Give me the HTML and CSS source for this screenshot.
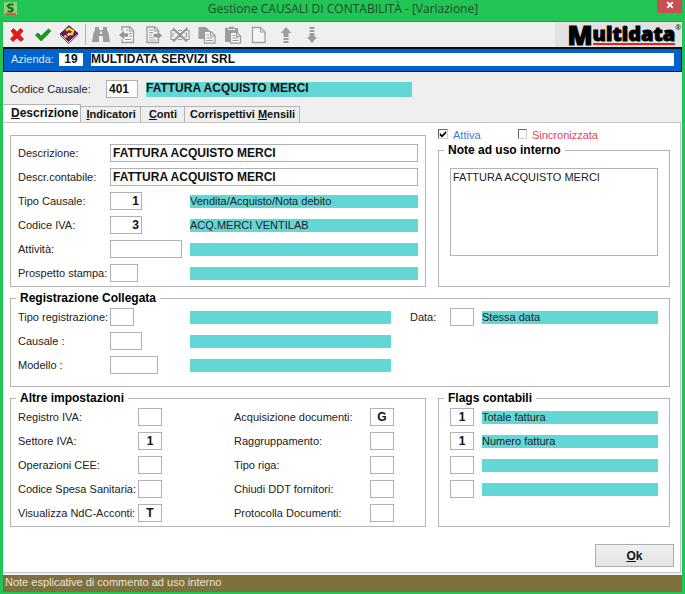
FILE: index.html
```html
<!DOCTYPE html>
<html lang="it">
<head>
  <meta charset="UTF-8" />
  <meta name="viewport" content="width=device-width, initial-scale=1.0" />
  <title>Gestione CAUSALI DI CONTABILITÀ - [Variazione]</title>
  <link rel="stylesheet" href="styles.css">
</head>
<body>
  <div class="window">
    <header class="titlebar">
      <svg class="app-icon" width="13" height="13" viewBox="0 0 13 13">
        <rect width="13" height="13" fill="#8fd07c" />
        <path d="M9.500 2.500H5.500L3.800 4L5 5.500L8 6.500L8.800 8L7.500 9.500H3.500" fill="none" stroke="#14701c" stroke-width="2.200" />
        <path d="M1 12H12" stroke="#e0402a" stroke-width="1.500" />
      </svg>
      <h1>Gestione CAUSALI DI CONTABILITÀ - [Variazione]</h1>
      <button class="close" type="button" aria-label="Chiudi">
        <svg width="8" height="8" viewBox="0 0 8 8"><path d="M1.200 1.200L6.800 6.800M6.800 1.200L1.200 6.800" stroke="#fff" stroke-width="1.800" /></svg>
      </button>
    </header>

    <div class="toolbar">
      <div class="tools">
        <button type="button" aria-label="Annulla">
          <svg width="18" height="18" viewBox="0 0 18 18"><path d="M3 5L5.500 2.500L9 6.200L12.500 2.500L15 5L11.700 9L15.500 13L13 15.500L9 11.800L5 15.500L2.500 13L6.300 9Z" fill="#e31b12" stroke="#b30d08" stroke-width=".8" /></svg>
        </button>
        <button type="button" aria-label="Conferma">
          <svg width="18" height="18" viewBox="0 0 18 18"><path d="M1.500 9L4 7L7 10.200L14.500 3L16.800 5L7.200 15Z" fill="#12a012" stroke="#0a7d0d" stroke-width=".8" /></svg>
        </button>
        <button type="button" aria-label="Guida">
          <svg width="20" height="20" viewBox="0 0 20 20">
            <path d="M1.500 10.500L9.500 18.500L18.500 10V8L9.500 16.300L1.500 8.500Z" fill="#e9e2ee" stroke="#4a1050" stroke-width=".8" />
            <path d="M1.500 8.500L10 .8L18.500 8L9.500 16.300Z" fill="#6b1670" stroke="#3e0a44" stroke-width=".8" />
            <path d="M7 5.500L10 3.500L14 6L13 9L10 8.800L8.500 10.500" fill="none" stroke="#f3e11c" stroke-width="2.200" />
            <path d="M5.500 10.500L7.500 12.500" stroke="#f3e11c" stroke-width="2.200" />
          </svg>
        </button>
      </div>
      <span class="separator"></span>
      <div class="tools tools-edit">
        <button type="button" aria-label="Cerca" disabled>
          <svg width="20" height="18" viewBox="0 0 20 18"><path d="M4 1H8V4H12V1H16V4L17.500 7L19 16H12V10H8V16H1L2.500 7L4 4Z" fill="#9c9c9c" /><path d="M9 5.500H11V8H9Z" fill="#efefef" /></svg>
        </button>
        <button type="button" aria-label="Precedente" disabled>
          <svg width="18" height="18" viewBox="0 0 18 18">
            <path d="M4 5V1H12L15.500 4.500V16.500H4V13" fill="#f6f6f6" stroke="#9c9c9c" stroke-width="1.300" />
            <path d="M11.500 1V5H15.500M8 4H10M11 7.500H14M11 10H14M7 13.500H13" fill="none" stroke="#9c9c9c" stroke-width="1.200" />
            <path d="M1 9L6 4.800V7.300H10V10.700H6V13.200Z" fill="#959595" />
          </svg>
        </button>
        <button type="button" aria-label="Successivo" disabled>
          <svg width="18" height="18" viewBox="0 0 18 18">
            <path d="M13.500 13V16.500H2V1H10L13.500 4.500V6" fill="#f6f6f6" stroke="#9c9c9c" stroke-width="1.300" />
            <path d="M9.500 1V5H13.500M4 4H8M4 6.500H8M4 9H7M4 11.500H8M4 14H11" fill="none" stroke="#9c9c9c" stroke-width="1.200" />
            <path d="M17 9.500L12.500 5.300V7.800H8.500V11.200H12.500V13.700Z" fill="#959595" />
          </svg>
        </button>
        <button type="button" aria-label="Elimina" disabled>
          <svg width="20" height="18" viewBox="0 0 20 18">
            <path d="M1 4.500H5M15 4.500H19V13.500H16M1 4.500V13.500H4M8 4.500H12M8 13.500H12" fill="none" stroke="#9c9c9c" stroke-width="1.200" />
            <path d="M3 7V11M5.500 7H4.500M14.500 7H16.500V11H14.500M9 8H11V11H9Z" fill="none" stroke="#9c9c9c" />
            <path d="M3 2.500L17 15.500M17.500 2L3 15.500" stroke="#959595" stroke-width="2" />
          </svg>
        </button>
        <button type="button" aria-label="Copia" disabled>
          <svg width="18" height="18" viewBox="0 0 18 18">
            <path d="M.5 1H8L11 4V13H.5Z" fill="#9c9c9c" />
            <path d="M6.500 5.500H13L17 9.500V17.200H6.500Z" fill="#f6f6f6" stroke="#9c9c9c" stroke-width="1.200" />
            <path d="M12.500 5.500V10H17M8.500 9H11M8.500 12H15M8.500 14.500H15" fill="none" stroke="#9c9c9c" stroke-width="1.200" />
          </svg>
        </button>
        <button type="button" aria-label="Incolla" disabled>
          <svg width="18" height="18" viewBox="0 0 18 18">
            <path d="M1 2H5V.8H10V2H14V16H1Z" fill="#9c9c9c" />
            <path d="M4 3.500H11" stroke="#efefef" />
            <path d="M6.500 6.500H13L16.500 10V17.200H6.500Z" fill="#f6f6f6" stroke="#9c9c9c" stroke-width="1.200" />
            <path d="M12.500 6.500V10.500H16.500M8.500 9.500H11M8.500 12H14.500M8.500 14.500H14.500" fill="none" stroke="#9c9c9c" stroke-width="1.200" />
          </svg>
        </button>
        <button type="button" aria-label="Nuovo" disabled>
          <svg width="18" height="18" viewBox="0 0 18 18"><path d="M2.500 1.500H10.500L15 6V16.500H2.500Z" fill="#f6f6f6" stroke="#a0a0a0" stroke-width="1.300" /><path d="M10.500 1.500V6H15" fill="none" stroke="#a0a0a0" stroke-width="1.200" /></svg>
        </button>
        <button type="button" aria-label="Su" disabled>
          <svg width="12" height="18" viewBox="0 0 12 18"><path d="M6 1L11.200 7H8.500V11H3.500V7H.8ZM3.500 12H8.500V14H3.500ZM3.500 15H8.500V17H3.500Z" fill="#9c9c9c" /></svg>
        </button>
        <button type="button" aria-label="Giù" disabled>
          <svg width="12" height="18" viewBox="0 0 12 18"><path d="M6 17L11.200 11H8.500V7H3.500V11H.8ZM3.500 4H8.500V6H3.500ZM3.500 1H8.500V3H3.500Z" fill="#9c9c9c" /></svg>
        </button>
      </div>
      <div class="logo"><span class="logo-initial">M</span><span class="logo-rest">ultidata</span><sup>®</sup></div>
    </div>

    <div class="company">
      <label for="azienda">Azienda:</label>
      <input class="company-code" id="azienda" value="19">
      <input class="company-name" value="MULTIDATA SERVIZI SRL" aria-label="Ragione sociale" readonly>
    </div>

    <div class="code-row">
      <label for="codice">Codice Causale:</label>
      <input class="field code" id="codice" value="401">
      <output class="bar bar-title">FATTURA ACQUISTO MERCI</output>
    </div>

    <nav class="tabs">
      <button class="tab active" type="button"><u>D</u>escrizione</button>
      <button class="tab" type="button"><u>I</u>ndicatori</button>
      <button class="tab tab-conti" type="button"><u>C</u>onti</button>
      <button class="tab" type="button">Corrispettivi <u>M</u>ensili</button>
    </nav>

    <main class="panel">
      <div class="columns">
        <fieldset class="group general">
          <div class="row">
            <label for="descrizione">Descrizione:</label>
            <input class="field wide" id="descrizione" value="FATTURA ACQUISTO MERCI">
          </div>
          <div class="row">
            <label for="contabile">Descr.contabile:</label>
            <input class="field wide" id="contabile" value="FATTURA ACQUISTO MERCI">
          </div>
          <div class="row">
            <label for="tipo">Tipo Causale:</label>
            <div class="slot"><input class="field w32 number" id="tipo" value="1"></div>
            <output class="bar">Vendita/Acquisto/Nota debito</output>
          </div>
          <div class="row">
            <label for="iva">Codice IVA:</label>
            <div class="slot"><input class="field w32 number" id="iva" value="3"></div>
            <output class="bar">ACQ.MERCI VENTILAB</output>
          </div>
          <div class="row">
            <label for="attivita">Attività:</label>
            <div class="slot"><input class="field w72" id="attivita"></div>
            <output class="bar"></output>
          </div>
          <div class="row">
            <label for="prospetto">Prospetto stampa:</label>
            <div class="slot"><input class="field w28" id="prospetto"></div>
            <output class="bar"></output>
          </div>
        </fieldset>

        <div class="side">
          <div class="checks">
            <label class="check blue"><input type="checkbox" checked>Attiva</label>
            <label class="check red"><input type="checkbox">Sincronizzata</label>
          </div>
          <fieldset class="group notes">
            <legend>Note ad uso interno</legend>
            <textarea aria-label="Note ad uso interno">FATTURA ACQUISTO MERCI</textarea>
          </fieldset>
        </div>
      </div>

      <fieldset class="group linked">
        <legend>Registrazione Collegata</legend>
        <div class="row">
          <label for="registrazione">Tipo registrazione:</label>
          <div class="slot"><input class="field w24" id="registrazione"></div>
          <output class="bar"></output>
        </div>
        <div class="row date">
          <label for="data">Data:</label>
          <input class="field w24" id="data">
          <output class="bar">Stessa data</output>
        </div>
        <div class="row">
          <label for="causale">Causale :</label>
          <div class="slot"><input class="field w32" id="causale"></div>
          <output class="bar"></output>
        </div>
        <div class="row">
          <label for="modello">Modello :</label>
          <div class="slot"><input class="field w48" id="modello"></div>
          <output class="bar"></output>
        </div>
      </fieldset>

      <div class="columns">
        <fieldset class="group settings">
          <legend>Altre impostazioni</legend>
          <div class="settings-grid">
            <label for="registro">Registro IVA:</label>
            <input class="field" id="registro">
            <label class="second" for="acquisizione">Acquisizione documenti:</label>
            <input class="field" id="acquisizione" value="G">

            <label for="settore">Settore IVA:</label>
            <input class="field" id="settore" value="1">
            <label class="second" for="raggruppamento">Raggruppamento:</label>
            <input class="field" id="raggruppamento">

            <label for="cee">Operazioni CEE:</label>
            <input class="field" id="cee">
            <label class="second" for="riga">Tipo riga:</label>
            <input class="field" id="riga">

            <label for="spesa">Codice Spesa Sanitaria:</label>
            <input class="field" id="spesa">
            <label class="second" for="ddt">Chiudi DDT fornitori:</label>
            <input class="field" id="ddt">

            <label for="ndc">Visualizza NdC-Acconti:</label>
            <input class="field" id="ndc" value="T">
            <label class="second" for="protocolla">Protocolla Documenti:</label>
            <input class="field" id="protocolla">
          </div>
        </fieldset>

        <fieldset class="group flags">
          <legend>Flags contabili</legend>
          <div class="row"><input class="field w24" value="1" aria-label="Flag 1"><output class="bar">Totale fattura</output></div>
          <div class="row"><input class="field w24" value="1" aria-label="Flag 2"><output class="bar">Numero fattura</output></div>
          <div class="row"><input class="field w24" aria-label="Flag 3"><output class="bar"></output></div>
          <div class="row"><input class="field w24" aria-label="Flag 4"><output class="bar"></output></div>
        </fieldset>
      </div>

      <button class="ok" type="submit"><u>O</u>k</button>
    </main>

    <footer class="status">Note esplicative di commento ad uso interno</footer>
  </div>
</body>
</html>
```
FILE: styles.css
```css
* {
  box-sizing: border-box;
}

body {
  margin: 0;
  font-family: "Liberation Sans", Arial, sans-serif;
  font-size: 11px;
  line-height: 14px;
  color: #222;
}

button,
input,
textarea {
  font-family: inherit;
  border-radius: 0;
  margin: 0;
}

label {
  white-space: nowrap;
}

.window {
  min-height: 100vh;
  display: flex;
  flex-direction: column;
  border: 3px solid #22c455;
  border-top: 0;
  background-color: #efefef;
}

/* title bar */
.titlebar {
  display: flex;
  align-items: flex-start;
  justify-content: space-between;
  height: 22px;
  background-color: #22c455;
  border-bottom: 1px solid #2c9a4c;
}

.app-icon {
  margin: 2px 12px 0 1px;
}

.titlebar h1 {
  margin: 0;
  font-family: "Open Sans", "Noto Sans", sans-serif;
  font-size: 12px;
  font-weight: normal;
  line-height: 18px;
  color: #1d4a2b;
}

.close {
  display: flex;
  align-items: center;
  justify-content: center;
  width: 25px;
  height: 13px;
  padding: 0 0 3px;
  border: 0;
  background-color: #c75050;
}

/* toolbar */
.toolbar {
  display: flex;
  align-items: center;
  height: 25px;
  padding-left: 1px;
}

.tools {
  display: flex;
}

.tools-edit {
  width: 237px;
  justify-content: space-between;
}

.tools button {
  display: flex;
  align-items: center;
  justify-content: center;
  width: 26px;
  height: 24px;
  padding: 0;
  border: 0;
  background: none;
}

.separator {
  width: 1px;
  height: 21px;
  margin: 0 2px 0 3px;
  background-color: #b4b4b4;
}

.logo {
  display: flex;
  align-items: flex-start;
  height: 25px;
  margin-left: auto;
  padding: 0 1px 0 12px;
  background-color: #e2e2e2;
  color: #000;
  font-family: "Open Sans", sans-serif;
  font-weight: 800;
}

.logo-initial {
  font-size: 26px;
  line-height: 26px;
  -webkit-text-stroke: 1px #000;
}

.logo-rest {
  height: 23px;
  font-size: 20px;
  line-height: 24px;
  border-bottom: 2px solid #f02018;
  -webkit-text-stroke: 1px #000;
}

.logo sup {
  font-size: 7px;
  line-height: 12px;
  font-weight: normal;
}

/* company strip */
.company {
  display: flex;
  align-items: center;
  height: 25px;
  padding: 0 7px 2px;
  border: 1px solid #111;
  border-top-width: 2px;
  background-color: #0063cc;
}

.company label {
  width: 48px;
  color: #d8ecff;
}

.company input {
  height: 13px;
  padding: 0;
  border: 0;
  background-color: #fff;
  color: #111;
  font-size: 12px;
  font-weight: bold;
}

.company-code {
  width: 24px;
  margin-right: 8px;
  text-align: center;
}

.company-name {
  flex: 1;
  min-width: 0;
}

/* code row */
.code-row {
  display: flex;
  align-items: center;
  padding: 8px 7px 6px;
}

.code-row label {
  width: 96px;
}

.field {
  width: 24px;
  height: 18px;
  padding: 0 2px;
  border: 1px solid #b0b0b6;
  background-color: #fff;
  color: #111;
  font-size: 12px;
  font-weight: bold;
  text-align: center;
}

.code {
  width: 32px;
  text-align: left;
}

.bar {
  flex: 1;
  min-width: 0;
  height: 13px;
  line-height: 13px;
  background-color: #62d7d6;
  white-space: nowrap;
}

.bar-title {
  flex: none;
  width: 40%;
  height: 15px;
  margin-left: 8px;
  font-size: 12px;
  font-weight: bold;
  color: #111;
}

/* tabs */
.tabs {
  display: flex;
  align-items: flex-end;
}

.tab {
  height: 16px;
  padding: 0 4px 0 5px;
  border: 1px solid #b4b4b4;
  border-width: 1px 1px 0 0;
  background-color: #efefef;
  color: #111;
  font-size: 11px;
  line-height: 15px;
  font-weight: bold;
}

.tab-conti {
  padding: 0 7px 0 8px;
}

.tab.active {
  height: 18px;
  padding: 0 2px 0 8px;
  background-color: #fff;
  font-size: 12px;
}

/* panel */
.panel {
  flex: 1;
  display: flex;
  flex-direction: column;
  gap: 4px;
  margin-right: 1px;
  padding: 5px 10px 5px 7px;
  border: 1px solid #c4c4c4;
  border-left: 0;
  background-color: #fff;
}

.columns {
  display: grid;
  grid-template-columns: minmax(0, 416fr) minmax(0, 232fr);
  gap: 12px;
}

.group {
  min-width: 0;
  margin: 0;
  padding: 3px 11px 4px 7px;
  border: 1px solid #b4b4b4;
}

.group legend {
  height: 14px;
  margin-left: -2px;
  padding: 0 4px;
  color: #000;
  font-size: 12px;
  font-weight: bold;
}

.side .group legend,
.flags legend {
  margin-left: -6px;
}

.general {
  margin-top: 7px;
  padding: 8px 7px 4px;
}

.row {
  display: flex;
  align-items: center;
  height: 18px;
}

.row + .row {
  margin-top: 6px;
}

.row label {
  width: 92px;
}

.slot {
  display: flex;
  width: 80px;
}

.wide {
  flex: 1;
  min-width: 0;
  text-align: left;
}

.w24 { width: 24px; }
.w28 { width: 28px; }
.w32 { width: 32px; }
.w48 { width: 48px; }
.w72 { width: 72px; }

.number {
  text-align: right;
}

.side {
  display: flex;
  flex-direction: column;
}

.checks {
  display: flex;
  height: 15px;
}

.check {
  display: flex;
  width: 80px;
  line-height: 15px;
}

.blue { color: #3f78e6; }
.red { color: #e64553; }

.check input {
  appearance: none;
  display: grid;
  width: 10px;
  height: 10px;
  margin: 1px 5px 0 0;
  border: 1px solid #d0d0d0;
  border-top-color: #666;
  border-left-color: #666;
  background-color: #fff;
}

.check input:checked::after {
  content: "";
  background-color: #000;
  clip-path: polygon(10% 35%, 38% 62%, 90% 8%, 90% 42%, 38% 95%, 10% 68%);
}

.notes {
  flex: 1;
  padding: 11px;
}

.notes textarea {
  display: block;
  width: 100%;
  height: 88px;
  padding: 1px 2px;
  border: 1px solid #b4b4b4;
  color: #222;
  font-size: 11px;
  line-height: 14px;
  resize: none;
}

.linked {
  display: grid;
  grid-template-columns: minmax(0, 373fr) minmax(0, 248fr);
  gap: 6px 19px;
  padding-bottom: 12px;
}

.linked .row {
  grid-column: 1;
  margin: 0;
}

.linked .date {
  grid-column: 2;
}

.date label {
  width: 40px;
}

.date .bar,
.flags .bar {
  margin-left: 8px;
}

.settings-grid {
  display: grid;
  grid-template-columns: 120px 24px minmax(0, 1fr) 24px;
  row-gap: 6px;
  align-items: center;
  padding-right: 20px;
}

.second {
  padding-left: 72px;
}

.flags {
  padding-left: 11px;
}

.ok {
  align-self: flex-end;
  width: 79px;
  height: 23px;
  margin: 13px -4px 0 0;
  border: 1px solid #acacac;
  background: linear-gradient(#f0f0f0, #e4e4e4);
  color: #111;
  font-size: 12px;
  font-weight: bold;
}

.status {
  height: 17px;
  margin-top: 2px;
  padding-left: 2px;
  background-color: #7f7040;
  color: #e8e4d4;
  line-height: 15px;
}
```
